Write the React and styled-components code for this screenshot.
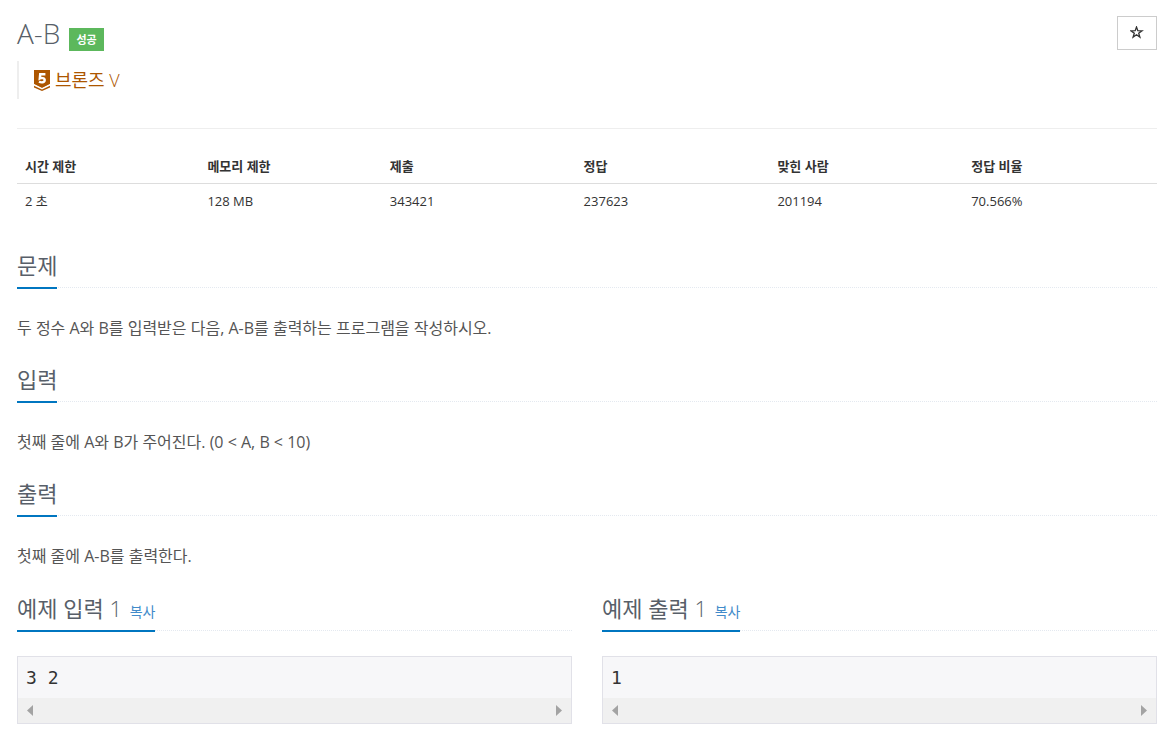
import React, { useState } from 'react';
import styled, { createGlobalStyle } from 'styled-components';

const STATS = [
  { label: '시간 제한',   value: '2 초',    width: 16 },
  { label: '메모리 제한', value: '128 MB',  width: 16 },
  { label: '제출',        value: '343421',  width: 17 },
  { label: '정답',        value: '237623',  width: 17 },
  { label: '맞힌 사람',   value: '201194',  width: 17 },
  { label: '정답 비율',   value: '70.566%', width: 17 },
];

const SECTIONS = [
  { title: '문제', body: '두 정수 A와 B를 입력받은 다음, A-B를 출력하는 프로그램을 작성하시오.' },
  { title: '입력', body: '첫째 줄에 A와 B가 주어진다. (0 < A, B < 10)' },
  { title: '출력', body: '첫째 줄에 A-B를 출력한다.' },
];

const SAMPLES = [
  { title: '예제 입력 1', data: '3 2' },
  { title: '예제 출력 1', data: '1' },
];

function TierBadge() {
  return (
    <svg width="16" height="21" viewBox="0 0 16 21" aria-hidden="true">
      <path d="M0 0h16v14l-8 4-8-4z" fill="#ad5600" />
      <path d="M0 14.2l8 4 8-4v1.2l-8 4-8-4z" fill="#fff" />
      <path d="M0 15.8l8 3.6 8-3.6v1.6L8 21l-8-3.6z" fill="#ad5600" />
      <path
        d="M11.4 4.2H6.2l-.4 4.2c1-.5 4.9-.9 4.9 1.7 0 2.5-3.3 2.7-5.7 1.6"
        fill="none"
        stroke="#fff"
        strokeWidth="2.4"
      />
    </svg>
  );
}

function Sample({ title, data }) {
  function handleCopy() {
    navigator.clipboard?.writeText(data);
  }

  return (
    <section>
      <Headline>
        <Title>
          {title} <CopyButton type="button" onClick={handleCopy}>복사</CopyButton>
        </Title>
      </Headline>
      <SampleBox>
        <SampleData>{data}</SampleData>
        <ScrollTrack>
          <svg width="6" height="11" viewBox="0 0 6 11" aria-hidden="true">
            <path d="M6 0v11L0 5.5z" fill="#a3a3a3" />
          </svg>
          <svg width="6" height="11" viewBox="0 0 6 11" aria-hidden="true">
            <path d="M0 0v11l6-5.5z" fill="#a3a3a3" />
          </svg>
        </ScrollTrack>
      </SampleBox>
    </section>
  );
}

function App() {
  const [starred, setStarred] = useState(false);

  return (
    <Page>
      <GlobalStyle />
      <Header>
        <div>
          <TitleRow>
            <ProblemTitle>A-B</ProblemTitle>
            <ResultLabel>성공</ResultLabel>
          </TitleRow>
          <Tier>
            <TierBadge />
            브론즈 V
          </Tier>
        </div>
        <StarButton
          type="button"
          aria-label="즐겨찾기"
          aria-pressed={starred}
          onClick={() => setStarred(s => !s)}
        >
          <svg width="14" height="14" viewBox="0 0 14 14" aria-hidden="true">
            <path
              d="M6.5 1l1.3 3.7 4.2.1-3.3 2.4 1.2 3.9-3.4-2.3-3.4 2.3 1.2-3.9L1 4.8l4.2-.1z"
              fill={starred ? '#333' : 'none'}
              stroke="#333"
              strokeWidth="1.3"
            />
          </svg>
        </StarButton>
      </Header>

      <StatTable>
        <thead>
          <tr>
            {STATS.map(s => <StatHead key={s.label} $width={s.width}>{s.label}</StatHead>)}
          </tr>
        </thead>
        <tbody>
          <tr>
            {STATS.map(s => <StatCell key={s.label}>{s.value}</StatCell>)}
          </tr>
        </tbody>
      </StatTable>

      {SECTIONS.map(s => (
        <section key={s.title}>
          <Headline>
            <Title>{s.title}</Title>
          </Headline>
          <Text>{s.body}</Text>
        </section>
      ))}

      <Samples>
        {SAMPLES.map(s => <Sample key={s.title} {...s} />)}
      </Samples>
    </Page>
  );
}

/* ── Styled Components ── */

// thin latin letters next to regular hangul
const LIGHT_FONT = "'Open Sans Light', 'Open Sans', 'Noto Sans CJK KR', sans-serif";

const GlobalStyle = createGlobalStyle`
  * {
    box-sizing: border-box;
  }
  body {
    margin: 0;
    background: #fff;
    color: #333;
    font-family: 'Open Sans', 'Noto Sans CJK KR', sans-serif;
    font-size: 13px;
    line-height: 20px;
  }
`;

const Page = styled.main`
  padding: 16px 19px 15px 17px;
`;

const Header = styled.header`
  display: flex;
  justify-content: space-between;
  align-items: flex-start;
  padding-bottom: 29px;
  margin-bottom: 20px;
  border-bottom: 1px solid #eee;
`;

const TitleRow = styled.div`
  display: flex;
  align-items: flex-end;
  gap: 9px;
  height: 35px;
  margin-bottom: 10px;
`;

const ProblemTitle = styled.h1`
  margin: 0;
  color: #585f69;
  font-family: ${LIGHT_FONT};
  font-size: 28px;
  font-weight: 400;
  line-height: 36px;
`;

const ResultLabel = styled.span`
  padding: 0 7px;
  background: #5cb85c;
  color: #fff;
  font-size: 11px;
  font-weight: 700;
  line-height: 23px;
`;

const Tier = styled.div`
  display: flex;
  align-items: center;
  gap: 5px;
  height: 38px;
  padding-left: 15px;
  border-left: 2px solid #eee;
  color: #ad5600;
  font-family: ${LIGHT_FONT};
  font-size: 18px;
`;

const StarButton = styled.button`
  display: flex;
  align-items: center;
  justify-content: center;
  width: 40px;
  height: 34px;
  padding: 0;
  background: #fff;
  border: 1px solid #ccc;
  cursor: pointer;
`;

const StatTable = styled.table`
  width: 100%;
  margin-bottom: 30px;
  border-collapse: collapse;
  table-layout: fixed;
`;

const StatHead = styled.th`
  width: ${({ $width }) => $width}%;
  padding: 7px 8px;
  border-bottom: 1px solid #ddd;
  font-size: 13px;
  font-weight: 700;
  text-align: left;
`;

const StatCell = styled.td`
  padding: 7px 8px 8px;
`;

const Headline = styled.div`
  display: flex;
  margin-bottom: 25px;
  border-bottom: 1px dotted #e4e9f0;
`;

const Title = styled.h2`
  margin: 0 0 -2px;
  padding-bottom: 5px;
  border-bottom: 2px solid #0076c0;
  color: #585f69;
  font-family: ${LIGHT_FONT};
  font-size: 22px;
  font-weight: 400;
  line-height: 33px;
`;

const CopyButton = styled.button`
  margin-left: 2px;
  padding: 0;
  background: none;
  border: none;
  color: #428bca;
  font-family: inherit;
  font-size: 14px;
  cursor: pointer;
`;

const Text = styled.p`
  margin: 0 0 20px;
  color: #555;
  font-size: 16px;
  line-height: 30px;
`;

const Samples = styled.div`
  display: grid;
  grid-template-columns: 1fr 1fr;
  gap: 30px;
  padding-top: 1px;
`;

const SampleBox = styled.div`
  background: #f7f7f9;
  border: 1px solid #e1e1e8;
`;

const SampleData = styled.pre`
  margin: 0;
  padding: 8px;
  font-family: 'DejaVu Sans Mono', monospace;
  font-size: 18px;
  line-height: 25px;
`;

const ScrollTrack = styled.div`
  display: flex;
  align-items: center;
  justify-content: space-between;
  height: 25px;
  padding: 0 9px;
  background: #f0f0f0;
`;

export default App;
